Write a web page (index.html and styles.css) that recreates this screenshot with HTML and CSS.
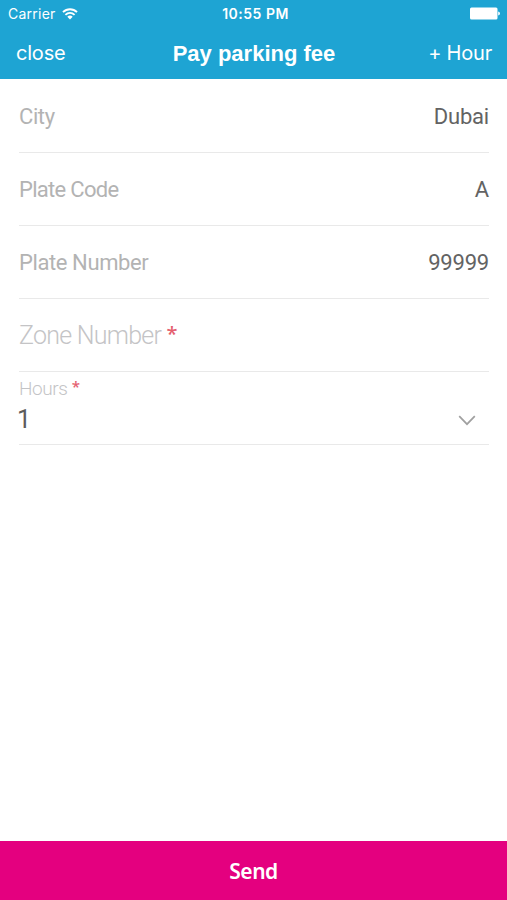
FILE: index.html
```html
<!doctype html>
<html lang="en">
  <head>
    <meta charset="UTF-8" />
    <meta name="viewport" content="width=device-width, initial-scale=1.0" />
    <title>Pay parking fee</title>
    <link rel="stylesheet" href="styles.css">
  </head>
  <body>
    <main class="screen">
      <header class="header">
        <div class="status-bar">
          <div class="status-left">
            <span class="carrier">Carrier</span>
            <svg class="wifi-icon" width="16" height="12" viewBox="0 0 16 12" fill="none" stroke="#fff" stroke-width="1.9">
              <path d="M1 4.2C5 .2 11 .2 15 4.2" />
              <path d="M3.4 6.9C6.1 4.3 9.9 4.3 12.6 6.9" />
              <path d="M5.3 8.7C7 7.2 9 7.2 10.7 8.7L8 11.4Z" fill="#fff" stroke="none" />
            </svg>
          </div>
          <span class="status-time">10:55 PM</span>
          <div class="status-right">
            <svg class="battery-icon" width="30" height="13" viewBox="0 0 30 13" fill="#fff">
              <rect x="0" y="0.5" width="27.5" height="12" rx="1.5" />
              <path d="M28.2 4.5Q30 5 30 6.5T28.2 8.5Z" />
            </svg>
          </div>
        </div>
        <nav class="nav-bar">
          <a class="nav-link" href="#">close</a>
          <h1 class="nav-title">Pay parking fee</h1>
          <a class="nav-link nav-link-right" href="#">+ Hour</a>
        </nav>
      </header>

      <form class="parking-form" id="parkingForm">
        <div class="form-row">
          <span class="label">City</span>
          <span class="value">Dubai</span>
        </div>
        <div class="form-row">
          <span class="label label-code">Plate Code</span>
          <span class="value">A</span>
        </div>
        <div class="form-row">
          <span class="label">Plate Number</span>
          <span class="value">99999</span>
        </div>
        <div class="form-row">
          <span class="placeholder">Zone Number <span class="required">*</span></span>
        </div>
        <div class="form-row form-row-select">
          <span class="small-label">Hours <span class="required">*</span></span>
          <div class="select">
            <span class="select-value">1</span>
            <svg class="chevron" width="18" height="11" viewBox="0 0 18 11" fill="none" stroke="#a0a0a0" stroke-width="1.7">
              <path d="M1.2 1.2L9 9.2L16.8 1.2" />
            </svg>
          </div>
        </div>
      </form>

      <button type="submit" form="parkingForm" class="send-button">Send</button>
    </main>
  </body>
</html>
```

FILE: styles.css
```css
* {
  margin: 0;
  padding: 0;
  box-sizing: border-box;
}

body {
  background: #fff;
  font-family: Roboto, "Noto Sans", sans-serif;
}

.screen {
  display: flex;
  flex-direction: column;
  height: 100vh;
}

.header {
  height: 79px;
  background: #1ea4d3;
  color: #fff;
  font-family: Inter, sans-serif;
}

.status-bar {
  display: grid;
  grid-template-columns: 1fr auto 1fr;
  align-items: center;
  height: 27px;
  padding: 0 7px 0 8px;
  font-size: 14px;
}

.status-left {
  display: flex;
  align-items: center;
  gap: 6px;
}

.carrier {
  letter-spacing: 0.25px;
}

.status-time {
  font-weight: 600;
  letter-spacing: 0.5px;
  padding-left: 3px;
}

.status-right {
  display: flex;
  justify-content: flex-end;
}

.nav-bar {
  display: grid;
  grid-template-columns: 1fr auto 1fr;
  align-items: center;
  height: 52px;
  padding: 0 15px 0 16px;
}

.nav-link {
  color: #fff;
  font-size: 20px;
  letter-spacing: -0.2px;
  text-decoration: none;
}

.nav-link-right {
  text-align: right;
}

.nav-title {
  padding-top: 1px;
  font-family: "Liberation Sans", sans-serif;
  font-size: 22px;
  font-weight: 700;
}

.parking-form {
  flex: 1;
  padding: 1px 18px 0 19px;
}

.form-row {
  display: flex;
  align-items: center;
  justify-content: space-between;
  height: 73.1px;
  border-bottom: 1px solid #e9e9e9;
  font-size: 22px;
}

.label {
  color: #b3b3b3;
  letter-spacing: -0.4px;
}

.label-code {
  letter-spacing: -0.7px;
}

.value {
  color: #636363;
  letter-spacing: -0.2px;
}

.placeholder {
  color: #c4c4c6;
  font-size: 25px;
  font-weight: 300;
  letter-spacing: -0.75px;
}

.required {
  color: #e4606f;
  font-family: "Noto Sans", sans-serif;
  font-size: 0.8em;
  font-weight: 500;
  line-height: 1;
  vertical-align: 3px;
}

.form-row-select {
  flex-direction: column;
  align-items: stretch;
  justify-content: flex-start;
  padding-top: 6px;
}

.small-label {
  color: #c4c4c6;
  font-size: 19px;
  font-weight: 300;
  letter-spacing: -0.4px;
  line-height: 22px;
}

.select {
  display: flex;
  align-items: center;
  justify-content: space-between;
  padding-right: 13px;
  line-height: 40px;
}

.select-value {
  color: #5c5c5c;
  font-size: 25px;
  margin-left: -2px;
}

.send-button {
  height: 59px;
  border: none;
  background: #e4007f;
  color: #fff;
  font-family: "Noto Sans", sans-serif;
  font-size: 21px;
  font-weight: 600;
  letter-spacing: -0.5px;
}
```
